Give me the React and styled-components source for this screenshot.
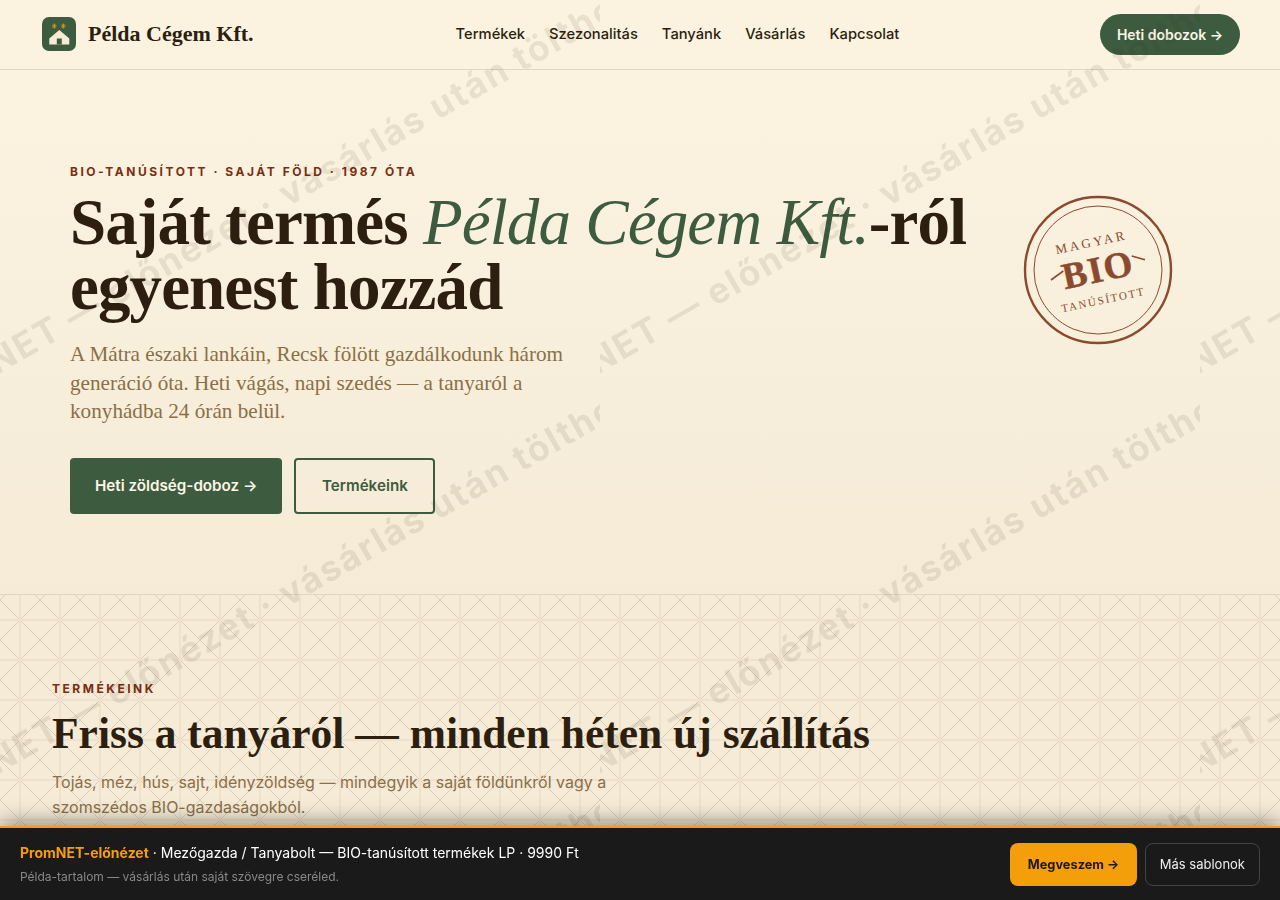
import styled, { createGlobalStyle } from 'styled-components';

const GlobalStyle = createGlobalStyle`
  * {
    box-sizing: border-box;
  }

  html, body {
    margin: 0;
    padding: 0;
    background: #f5ebd7;
    color: #2c1f10;
    font-family: Inter, 'Liberation Sans', sans-serif;
  }
`;

const serif = `'Liberation Serif', 'DejaVu Serif', serif`;

const Header = styled.header`
  height: 70px;
  padding: 0 40px 0 42px;
  display: flex;
  align-items: center;
  justify-content: space-between;
  background: #fbf3e0;
  border-bottom: 1px solid #e2d6bd;
`;

const Brand = styled.a`
  display: flex;
  align-items: center;
  gap: 12px;
  width: 213px;
  margin-bottom: 1px;
  font-family: ${serif};
  font-size: 22px;
  font-weight: 700;
  white-space: nowrap;
  color: #2c1f10;
`;

const Nav = styled.nav`
  display: flex;
  gap: 24px;
  margin-bottom: 1px;
`;

const NavLink = styled.a`
  font-size: 14.72px;
  font-weight: 500;
  color: #2c1f10;
`;

const PillButton = styled.a`
  width: 140px;
  height: 41px;
  display: flex;
  align-items: center;
  justify-content: center;
  border-radius: 21px;
  background: #3d5c3f;
  color: #fdf6e7;
  font-size: 14px;
  font-weight: 600;
`;

const Hero = styled.section`
  height: 524px;
  padding: 94px 70px 0;
  display: flex;
  justify-content: space-between;
  background: linear-gradient(180deg, #fbf3e0, #f5ebd7);
`;

const HeroText = styled.div`
  width: 920px;
`;

const Eyebrow = styled.div`
  font-size: 12px;
  line-height: 16px;
  font-weight: 700;
  letter-spacing: 2.52px;
  text-transform: uppercase;
  color: #7a2e12;
`;

const Headline = styled.h1`
  margin: 10px 0 0;
  font-family: ${serif};
  font-size: 65px;
  line-height: 65px;
  font-weight: 700;
  letter-spacing: -0.9px;
  color: #2c1f10;
`;

const Accent = styled.em`
  font-weight: 400;
  color: #3d5c3f;
`;

const Lead = styled.p`
  width: 520px;
  margin: 20px 0 0;
  font-family: ${serif};
  font-size: 21.2px;
  line-height: 28.5px;
  color: #8b6f47;
`;

const Actions = styled.div`
  display: flex;
  gap: 12px;
  margin-top: 32px;
`;

const HeroButton = styled.a`
  height: 56px;
  padding: 0 25px;
  display: flex;
  align-items: center;
  border-radius: 4px;
  background: #3d5c3f;
  color: #fdf6e7;
  font-size: 15.2px;
  font-weight: 600;
`;

const OutlineButton = styled(HeroButton)`
  padding: 0 25.5px;
  border: 2px solid #3d5c3f;
  background: transparent;
  color: #3d5c3f;
`;

const Stamp = styled.svg`
  width: 150px;
  height: 150px;
  margin: 31px 37px 0 0;
  flex-shrink: 0;
`;

const Products = styled.section`
  height: 306px;
  padding: 86px 52px 0;
  border-top: 1px solid #e2d6bd;
  background-color: #f5ebd7;
  background-image:
    linear-gradient(transparent 19px, #eee2cc 19px, #eee2cc 21px, transparent 21px),
    linear-gradient(90deg, transparent 19px, #eee2cc 19px, #eee2cc 21px, transparent 21px),
    linear-gradient(45deg, transparent calc(50% - 0.5px), #dccfb6 calc(50% - 0.5px), #dccfb6 calc(50% + 0.5px), transparent calc(50% + 0.5px)),
    linear-gradient(-45deg, transparent calc(50% - 0.5px), #dccfb6 calc(50% - 0.5px), #dccfb6 calc(50% + 0.5px), transparent calc(50% + 0.5px));
  background-size: 40px 40px;
  background-position: 0 5px;
`;

const SectionTitle = styled.h2`
  margin: 10px 0 0;
  font-family: ${serif};
  font-size: 43.5px;
  line-height: 52px;
  font-weight: 700;
  color: #2c1f10;
`;

const SectionLead = styled.p`
  width: 600px;
  margin: 11px 0 0;
  font-size: 16px;
  line-height: 25px;
  color: #8b6f47;
`;

const Watermark = styled.div`
  position: fixed;
  inset: 0;
  z-index: 10;
  display: grid;
  grid-template-columns: repeat(3, 600px);
  grid-auto-rows: 400px;
  overflow: hidden;
  pointer-events: none;
`;

const WatermarkTile = styled.svg`
  width: 600px;
  height: 400px;
  display: block;
`;

const PreviewBar = styled.div`
  position: fixed;
  left: 0;
  right: 0;
  bottom: 0;
  z-index: 20;
  height: 74px;
  padding: 0 20px;
  display: flex;
  align-items: center;
  justify-content: space-between;
  border-top: 2px solid #f59e0b;
  background: #1a1a1a;
  box-shadow: 0 -4px 20px rgba(0, 0, 0, 0.4);
`;

const BarText = styled.div`
  padding-bottom: 1px;
`;

const BarTitle = styled.div`
  font-size: 14px;
  line-height: 20px;
  color: #fff;
`;

const BarBrand = styled.strong`
  font-weight: 700;
  color: #f59e0b;
`;

const BarNote = styled.div`
  margin-top: 6px;
  font-size: 12px;
  line-height: 16px;
  color: #888;
`;

const BarActions = styled.div`
  display: flex;
  gap: 8px;
`;

const BarButton = styled.a`
  height: 43px;
  padding: 0 ${({ $primary }) => ($primary ? '17.5px' : '14px')};
  display: flex;
  align-items: center;
  border-radius: 8px;
  border: ${({ $primary }) => ($primary ? 'none' : '1px solid #444')};
  background: ${({ $primary }) => ($primary ? '#f59e0b' : 'transparent')};
  color: ${({ $primary }) => ($primary ? '#1a1a1a' : '#eee')};
  font-size: ${({ $primary }) => ($primary ? '12.8px' : '13px')};
  font-weight: ${({ $primary }) => ($primary ? 700 : 400)};
`;

function LogoMark() {
  return (
    <svg width="34" height="34" viewBox="0 0 34 34">
      <rect width="34" height="34" rx="7" fill="#3d5c3f" />
      <path d="M17.3 13 L27.3 21.5 V27.5 H7.3 V21.5 Z" fill="#f5ebd7" />
      <rect x="14.8" y="21.5" width="5" height="6" fill="#3d5c3f" />
      <path
        d="M12.3 6.5v5M10.3 8.2h4M10.3 10h4M21.3 6.5v5M19.3 8.2h4M19.3 10h4"
        stroke="#d99a1c"
        strokeWidth="1"
        fill="none"
      />
    </svg>
  );
}

function BioStamp() {
  const color = '#8b4a2f';
  return (
    <Stamp viewBox="0 0 150 150">
      <circle cx="75" cy="75" r="73" fill="none" stroke={color} strokeWidth="2.4" />
      <circle cx="75" cy="75" r="64" fill="none" stroke={color} strokeWidth="1" />
      <g transform="rotate(-12 75 75)" fill={color} fontFamily="Liberation Serif, serif" textAnchor="middle">
        <text x="74" y="51" fontSize="13" letterSpacing="2.7">MAGYAR</text>
        <text x="75" y="87" fontSize="37" fontWeight="700" letterSpacing="1.5" stroke={color} strokeWidth="0.5">BIO</text>
        <text x="74" y="109" fontSize="11" letterSpacing="1.8">TANÚSÍTOTT</text>
      </g>
      <path d="M28 85 L40.3 76 M108.7 61 L122 64.7" stroke={color} strokeWidth="1.6" fill="none" />
    </Stamp>
  );
}

export default function App() {
  return (
    <>
      <GlobalStyle />
      <Header>
        <Brand>
          <LogoMark />
          Példa Cégem Kft.
        </Brand>
        <Nav>
          {['Termékek', 'Szezonalitás', 'Tanyánk', 'Vásárlás', 'Kapcsolat'].map((item) => (
            <NavLink key={item}>{item}</NavLink>
          ))}
        </Nav>
        <PillButton>Heti dobozok →</PillButton>
      </Header>
      <Hero>
        <HeroText>
          <Eyebrow>BIO-tanúsított · saját föld · 1987 óta</Eyebrow>
          <Headline>
            Saját termés <Accent>Példa Cégem Kft.</Accent>-ról egyenest hozzád
          </Headline>
          <Lead>
            A Mátra északi lankáin, Recsk fölött gazdálkodunk három generáció óta. Heti vágás, napi
            szedés — a tanyaról a konyhádba 24 órán belül.
          </Lead>
          <Actions>
            <HeroButton>Heti zöldség-doboz →</HeroButton>
            <OutlineButton>Termékeink</OutlineButton>
          </Actions>
        </HeroText>
        <BioStamp />
      </Hero>
      <Products>
        <Eyebrow>Termékeink</Eyebrow>
        <SectionTitle>Friss a tanyáról — minden héten új szállítás</SectionTitle>
        <SectionLead>
          Tojás, méz, hús, sajt, idényzöldség — mindegyik a saját földünkről vagy a szomszédos
          BIO-gazdaságokból.
        </SectionLead>
      </Products>
      <Watermark>
        {Array.from({ length: 9 }, (_, i) => (
          <WatermarkTile key={i} viewBox="0 0 600 400">
            <text
              x="279"
              y="200"
              transform="rotate(-30 300 200)"
              textAnchor="middle"
              fontFamily="Inter, sans-serif"
              fontSize="35.5"
              fontWeight="700"
              letterSpacing="2"
              fill="rgba(44, 31, 16, 0.09)"
            >
              PromNET — előnézet · vásárlás után tölthető
            </text>
          </WatermarkTile>
        ))}
      </Watermark>
      <PreviewBar>
        <BarText>
          <BarTitle>
            <BarBrand>PromNET-előnézet</BarBrand> · Mezőgazda / Tanyabolt — BIO-tanúsított termékek LP · 9990 Ft
          </BarTitle>
          <BarNote>Példa-tartalom — vásárlás után saját szövegre cseréled.</BarNote>
        </BarText>
        <BarActions>
          <BarButton $primary>Megveszem →</BarButton>
          <BarButton>Más sablonok</BarButton>
        </BarActions>
      </PreviewBar>
    </>
  );
}
